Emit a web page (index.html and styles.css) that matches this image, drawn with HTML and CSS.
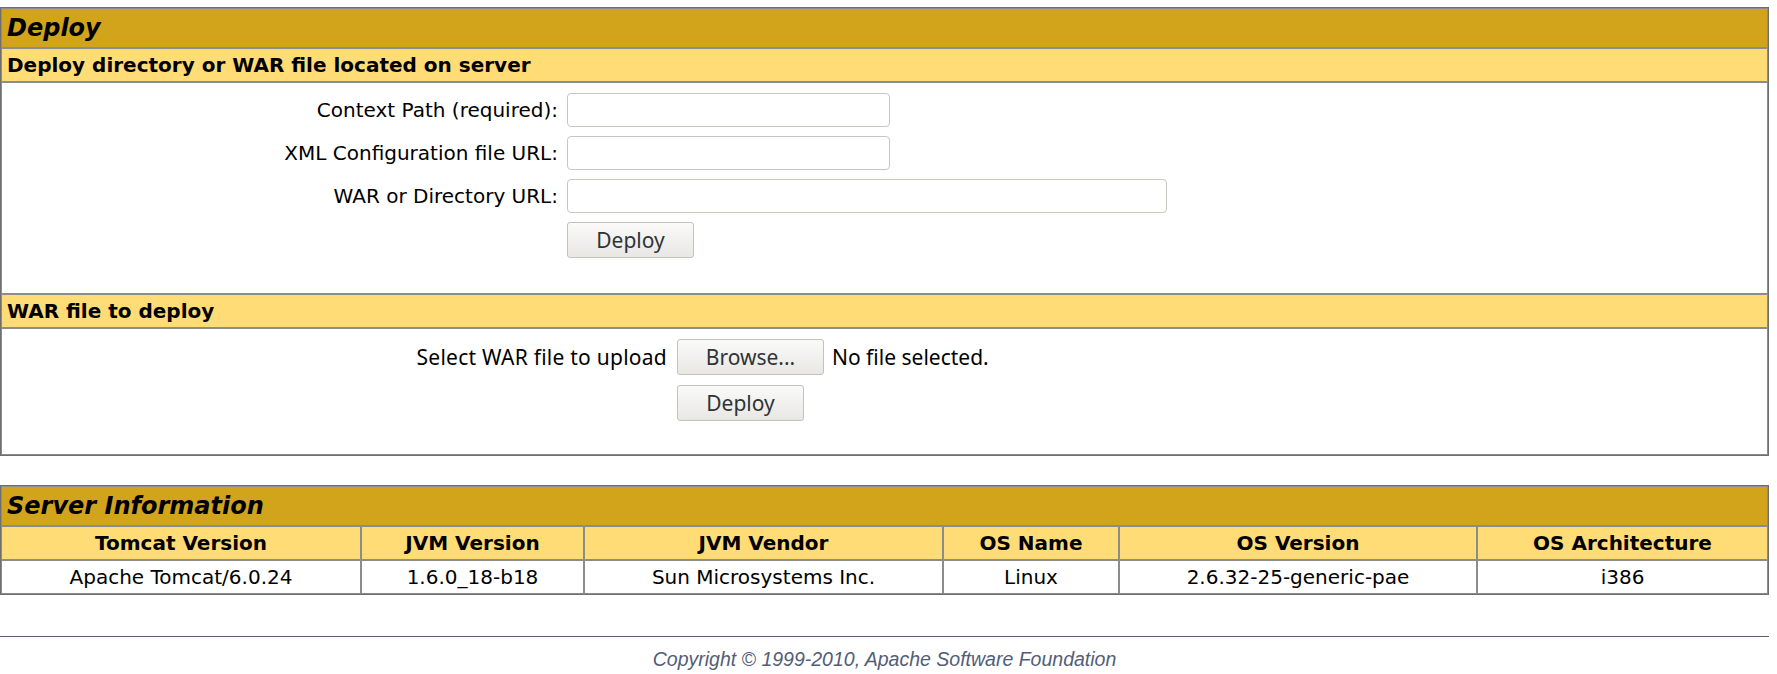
FILE: index.html
```html
<!DOCTYPE html>
<html lang="en">
<head>
<meta charset="utf-8">
<title>Tomcat Manager</title>
<link rel="stylesheet" href="styles.css">
</head>
<body>
<table class="panel">
  <tr><td class="title">Deploy</td></tr>
  <tr><td class="header-left">Deploy directory or WAR file located on server</td></tr>
  <tr>
    <td class="section-body">
      <form class="form-grid form-server">
        <label class="lbl" for="deployPath">Context Path (required):</label>
        <input class="txt txt-short" id="deployPath" type="text">
        <label class="lbl" for="deployConfig">XML Configuration file URL:</label>
        <input class="txt txt-short" id="deployConfig" type="text">
        <label class="lbl" for="deployWar">WAR or Directory URL:</label>
        <input class="txt txt-long" id="deployWar" type="text">
        <span class="spacer"></span>
        <button class="btn btn-deploy" type="button">Deploy</button>
      </form>
    </td>
  </tr>
  <tr><td class="header-left">WAR file to deploy</td></tr>
  <tr>
    <td class="section-body section-upload">
      <form class="form-grid form-upload">
        <span class="lbl-ui">Select WAR file to upload</span>
        <span class="file-field"><button class="btn btn-browse" type="button">Browse...</button><span class="file-status">No file selected.</span></span>
        <span class="spacer"></span>
        <button class="btn btn-deploy" type="button">Deploy</button>
      </form>
    </td>
  </tr>
</table>

<table class="panel info">
  <colgroup>
    <col class="c1"><col class="c2"><col class="c3"><col class="c4"><col class="c5"><col class="c6">
  </colgroup>
  <tr><td class="title" colspan="6">Server Information</td></tr>
  <tr>
    <td class="header-center">Tomcat Version</td>
    <td class="header-center">JVM Version</td>
    <td class="header-center">JVM Vendor</td>
    <td class="header-center">OS Name</td>
    <td class="header-center">OS Version</td>
    <td class="header-center">OS Architecture</td>
  </tr>
  <tr>
    <td class="row-center">Apache Tomcat/6.0.24</td>
    <td class="row-center">1.6.0_18-b18</td>
    <td class="row-center">Sun Microsystems Inc.</td>
    <td class="row-center">Linux</td>
    <td class="row-center">2.6.32-25-generic-pae</td>
    <td class="row-center">i386</td>
  </tr>
</table>

<hr class="rule">
<p class="footer">Copyright &copy; 1999-2010, Apache Software Foundation</p>
</body>
</html>
```

FILE: styles.css
```css
html, body {
  background: #ffffff;
}

body {
  margin: 7px 8px 0 0;
  font-family: "DejaVu Sans", Verdana, sans-serif;
  font-size: 20px;
  color: #000000;
}

.panel {
  width: 100%;
  border: 1px solid #6f6f6f;
  border-collapse: separate;
  border-spacing: 0;
}

.panel td {
  border: 1px solid #8c8c8c;
  padding: 0;
}

.title {
  background: #d2a41c;
  font-weight: bold;
  font-style: italic;
  font-size: 24px;
  line-height: 28px;
  padding: 5px 5px !important;
  text-align: left;
}

.header-left {
  background: #ffdc75;
  font-weight: bold;
  font-size: 20px;
  line-height: 24px;
  padding: 4px 5px !important;
  text-align: left;
}

.header-center {
  background: #ffdc75;
  font-weight: bold;
  font-size: 20px;
  line-height: 24px;
  padding: 4px 5px !important;
  text-align: center;
}

.row-center {
  font-size: 20px;
  line-height: 24px;
  padding: 4px 5px !important;
  text-align: center;
}

.section-body {
  padding: 10px 0 35px 0 !important;
}

.section-upload {
  padding: 10px 0 33px 0 !important;
}

.form-grid {
  display: grid;
  align-items: center;
  margin: 0;
}

.form-server {
  grid-template-columns: 556px auto;
  column-gap: 9px;
  row-gap: 9px;
  justify-items: start;
}

.form-upload {
  grid-template-columns: 665px auto;
  column-gap: 10px;
  row-gap: 10px;
  justify-items: start;
}

.lbl {
  justify-self: end;
  font-size: 20px;
  line-height: 24px;
}

.lbl-ui {
  justify-self: end;
  font-family: "Noto Sans", "Open Sans", sans-serif;
  font-size: 21px;
  letter-spacing: 0.25px;
  line-height: 24px;
}

.txt {
  box-sizing: border-box;
  height: 34px;
  margin: 0;
  border: 1px solid #c9c6c1;
  border-radius: 4px;
  background: #ffffff;
  font: 20px "DejaVu Sans", sans-serif;
  padding: 0 6px;
}

.txt-short {
  width: 323px;
}

.txt-long {
  width: 600px;
}

.btn {
  box-sizing: border-box;
  height: 36px;
  margin: 0;
  padding: 0;
  border: 1px solid #c5c1bb;
  border-radius: 3px;
  background: linear-gradient(#fafaf9, #e9e7e4);
  color: #2e3436;
  font-family: "Noto Sans", "Open Sans", sans-serif;
  font-size: 21px;
  line-height: 34px;
  text-align: center;
}

.btn-deploy {
  width: 127px;
}

.btn-browse {
  width: 147px;
}

.file-field {
  display: flex;
  align-items: center;
  gap: 8px;
}

.file-status {
  font-family: "Noto Sans", "Open Sans", sans-serif;
  font-size: 21px;
  line-height: 24px;
}

.info {
  margin-top: 29px;
  table-layout: fixed;
}

.info .c1 { width: 360px; }
.info .c2 { width: 223px; }
.info .c3 { width: 359px; }
.info .c4 { width: 176px; }
.info .c5 { width: 358px; }
.info .c6 { width: auto; }

.rule {
  margin: 41px 0 0 0;
  border: 0;
  border-top: 1px solid #525d76;
  height: 0;
}

.footer {
  margin: 11px 0 0 0;
  text-align: center;
  font-family: "Liberation Sans", Arial, sans-serif;
  font-style: italic;
  font-size: 19.5px;
  line-height: 22px;
  color: #525d76;
}
```
